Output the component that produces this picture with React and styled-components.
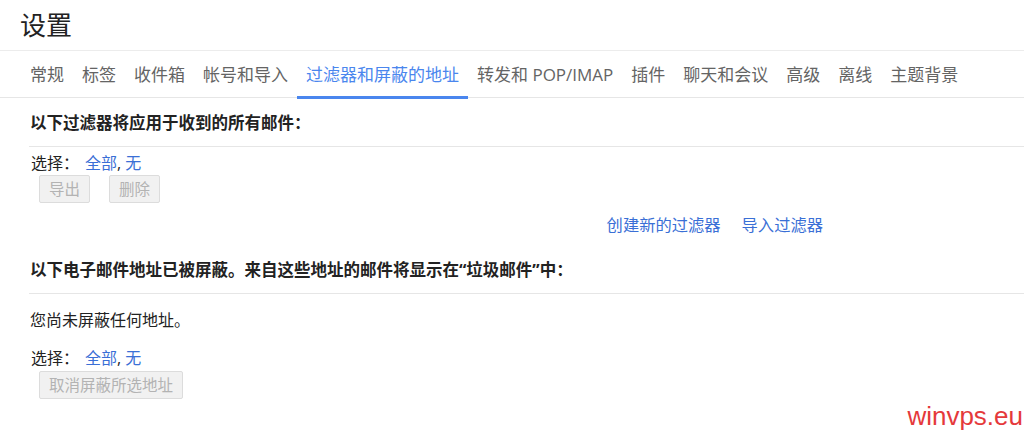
import React from "react";
import styled, { createGlobalStyle } from "styled-components";

const Global = createGlobalStyle`
  html, body { margin: 0; padding: 0; background: #fff; }
  body {
    font-family: "Open Sans", "Noto Sans CJK SC", sans-serif;
    color: #222;
    width: 1024px;
    height: 431px;
    overflow: hidden;
  }
`;

const Page = styled.div`
  position: relative;
  width: 1024px;
  height: 431px;
`;

const Header = styled.header`
  height: 51px;
  box-sizing: border-box;
  padding: 8px 0 0 20px;
  border-bottom: 1px solid #ececec;
`;

const Title = styled.h1`
  margin: 0;
  font-size: 26px;
  font-weight: 400;
  line-height: 34px;
  color: #222;
`;

const TabBar = styled.nav`
  display: flex;
  padding-left: 21px;
  border-bottom: 1px solid #e6e6e6;
`;

const Tab = styled.div`
  padding: 2px 9px 0;
  height: 43px;
  line-height: 44px;
  font-size: 17px;
  white-space: nowrap;
  color: ${(p) => (p.$active ? "#4a86ee" : "#646464")};
  border-bottom: 3px solid ${(p) => (p.$active ? "#4a86ee" : "transparent")};
  margin-bottom: -2px;
`;

const Content = styled.main`
  padding-left: 29px;
`;

const SectionHeading = styled.h2`
  margin: ${(p) => p.$top || 0}px 0 0 0;
  padding: 13px 0 11px 1px;
  font-size: 16.5px;
  font-weight: 700;
  line-height: 24px;
  color: #222;
  border-bottom: 1px solid #e6e6e6;
`;

const SelectRow = styled.div`
  display: flex;
  align-items: center;
  padding-left: 2px;
  margin-top: ${(p) => p.$top}px;
  font-size: 16px;
  line-height: 22px;
  color: #222;
`;

const Label = styled.span`
  margin-right: 6px;
`;

const Link = styled.a`
  color: #3a6fd6;
  text-decoration: none;
  cursor: pointer;
`;

const ButtonRow = styled.div`
  display: flex;
  gap: 19px;
  margin: ${(p) => p.$top}px 0 0 10px;
`;

const Button = styled.button`
  height: 28px;
  padding: 0 9px;
  box-sizing: border-box;
  background: #f1f1f1;
  border: 1px solid #dcdcdc;
  border-radius: 2px;
  font-family: "Open Sans", "Noto Sans CJK SC", sans-serif;
  font-size: 15.5px;
  line-height: 26px;
  color: #b3b3b3;
  cursor: default;
`;

const LinkRow = styled.div`
  display: flex;
  justify-content: flex-end;
  gap: 21px;
  width: 794px;
  margin-top: 11px;
  font-size: 16.3px;
  line-height: 22px;
`;

const Paragraph = styled.p`
  margin: 0;
  padding: 15px 0 0 1px;
  font-size: 16px;
  line-height: 22px;
  color: #222;
`;

const Watermark = styled.div`
  position: absolute;
  right: 1px;
  bottom: 0px;
  font-family: "Liberation Sans", sans-serif;
  font-size: 26px;
  line-height: 30px;
  color: #e5393b;
`;

const tabs = [
  "常规",
  "标签",
  "收件箱",
  "帐号和导入",
  "过滤器和屏蔽的地址",
  "转发和 POP/IMAP",
  "插件",
  "聊天和会议",
  "高级",
  "离线",
  "主题背景",
];

function Selector({ top }) {
  return (
    <SelectRow $top={top}>
      <Label>选择：</Label>
      <Link>全部</Link>, <Link>&nbsp;无</Link>
    </SelectRow>
  );
}

export default function App() {
  return (
    <Page>
      <Global />
      <Header>
        <Title>设置</Title>
      </Header>
      <TabBar>
        {tabs.map((t) => (
          <Tab key={t} $active={t === "过滤器和屏蔽的地址"}>
            {t}
          </Tab>
        ))}
      </TabBar>
      <Content>
        <SectionHeading>以下过滤器将应用于收到的所有邮件：</SectionHeading>
        <Selector top={5} />
        <ButtonRow $top={1}>
          <Button>导出</Button>
          <Button>删除</Button>
        </ButtonRow>
        <LinkRow>
          <Link>创建新的过滤器</Link>
          <Link>导入过滤器</Link>
        </LinkRow>
        <SectionHeading $top={9}>
          以下电子邮件地址已被屏蔽。来自这些地址的邮件将显示在“垃圾邮件”中：
        </SectionHeading>
        <Paragraph>您尚未屏蔽任何地址。</Paragraph>
        <Selector top={16} />
        <ButtonRow $top={2}>
          <Button>取消屏蔽所选地址</Button>
        </ButtonRow>
      </Content>
      <Watermark>winvps.eu</Watermark>
    </Page>
  );
}
